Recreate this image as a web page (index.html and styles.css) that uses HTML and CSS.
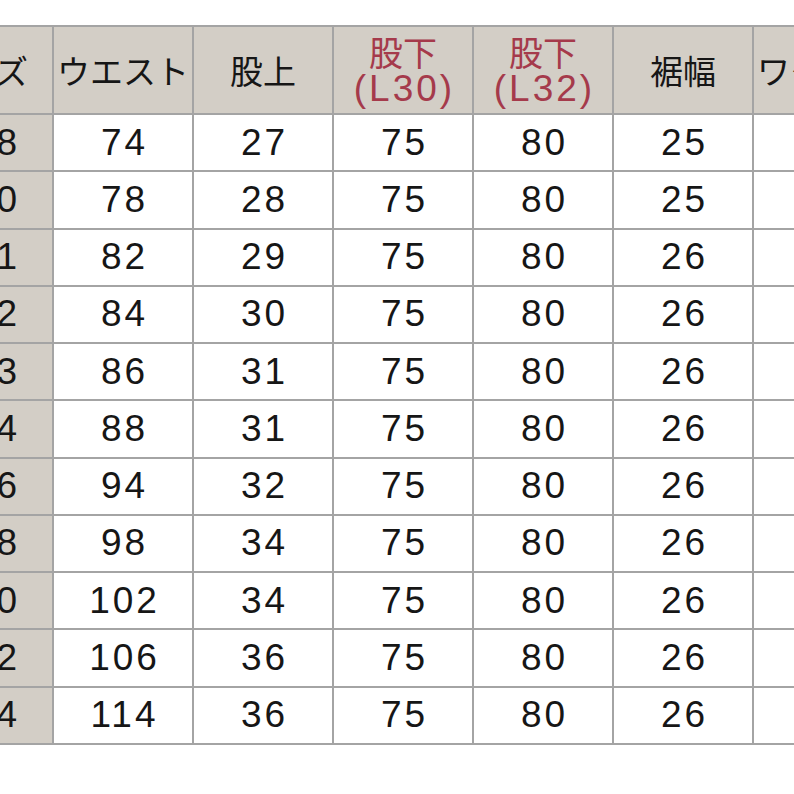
FILE: index.html
```html
<!DOCTYPE html>
<html lang="ja">
<head>
<meta charset="utf-8">
<link rel="stylesheet" href="styles.css">
</head>
<body>
<div class="wrap">
<table class="size-table">
<colgroup>
<col class="c"><col class="c"><col class="c"><col class="c"><col class="c"><col class="c"><col class="c">
</colgroup>
<thead>
<tr>
<th class="first-h">サイズ</th>
<th>ウエスト</th>
<th>股上</th>
<th class="red"><span class="kanji">股下</span><span class="lsize">(L30)</span></th>
<th class="red"><span class="kanji">股下</span><span class="lsize">(L32)</span></th>
<th>裾幅</th>
<th>ワタリ幅</th>
</tr>
</thead>
<tbody>
<tr><th class="size">28</th><td>74</td><td>27</td><td>75</td><td>80</td><td>25</td><td>31</td></tr>
<tr><th class="size">30</th><td>78</td><td>28</td><td>75</td><td>80</td><td>25</td><td>32</td></tr>
<tr><th class="size">31</th><td>82</td><td>29</td><td>75</td><td>80</td><td>26</td><td>33</td></tr>
<tr><th class="size">32</th><td>84</td><td>30</td><td>75</td><td>80</td><td>26</td><td>33</td></tr>
<tr><th class="size">33</th><td>86</td><td>31</td><td>75</td><td>80</td><td>26</td><td>34</td></tr>
<tr><th class="size">34</th><td>88</td><td>31</td><td>75</td><td>80</td><td>26</td><td>34</td></tr>
<tr><th class="size">36</th><td>94</td><td>32</td><td>75</td><td>80</td><td>26</td><td>35</td></tr>
<tr><th class="size">38</th><td>98</td><td>34</td><td>75</td><td>80</td><td>26</td><td>36</td></tr>
<tr><th class="size">40</th><td>102</td><td>34</td><td>75</td><td>80</td><td>26</td><td>37</td></tr>
<tr><th class="size">42</th><td>106</td><td>36</td><td>75</td><td>80</td><td>26</td><td>38</td></tr>
<tr><th class="size">44</th><td>114</td><td>36</td><td>75</td><td>80</td><td>26</td><td>39</td></tr>
</tbody>
</table>
</div>
</body>
</html>
```
FILE: styles.css
```css
html, body {
  margin: 0;
  padding: 0;
  background: #ffffff;
  overflow: hidden;
  width: 794px;
  height: 794px;
}
.wrap {
  padding-top: 25px;
  width: 794px;
  overflow: hidden;
}
.size-table {
  margin-left: -88px;
  border-collapse: collapse;
  table-layout: fixed;
  width: 982px;
  color: #161616;
}
.size-table col.c {
  width: 140px;
}
.size-table th,
.size-table td {
  border: 2px solid #a4a4a4;
  padding: 0;
  text-align: center;
  vertical-align: middle;
}
.size-table thead th {
  height: 86px;
  background: #d3cec6;
  font-family: "Noto Sans CJK JP", "Noto Sans", sans-serif;
  font-weight: 400;
  font-size: 33px;
  line-height: 38px;
}
.size-table thead th.red {
  color: #a53a4b;
}
.kanji,
.lsize {
  display: block;
  white-space: nowrap;
}
.kanji {
  font-size: 34px;
  line-height: 37px;
}
.lsize {
  font-family: "Liberation Sans", Arial, sans-serif;
  font-size: 37px;
  line-height: 38px;
  letter-spacing: 3px;
  padding-left: 3px;
}
.size-table thead th.first-h {
  text-align: right;
  padding-right: 24px;
}
.size-table tbody td,
.size-table tbody th {
  height: 55.27px;
  font-family: "Liberation Sans", Arial, sans-serif;
  font-weight: 400;
  font-size: 37px;
  letter-spacing: 3px;
  line-height: 40px;
}
.size-table tbody td {
  background: #ffffff;
  padding-left: 3px;
}
.size-table tbody th.size {
  background: #d3cec6;
  text-align: right;
  padding-right: 32px;
}
```
